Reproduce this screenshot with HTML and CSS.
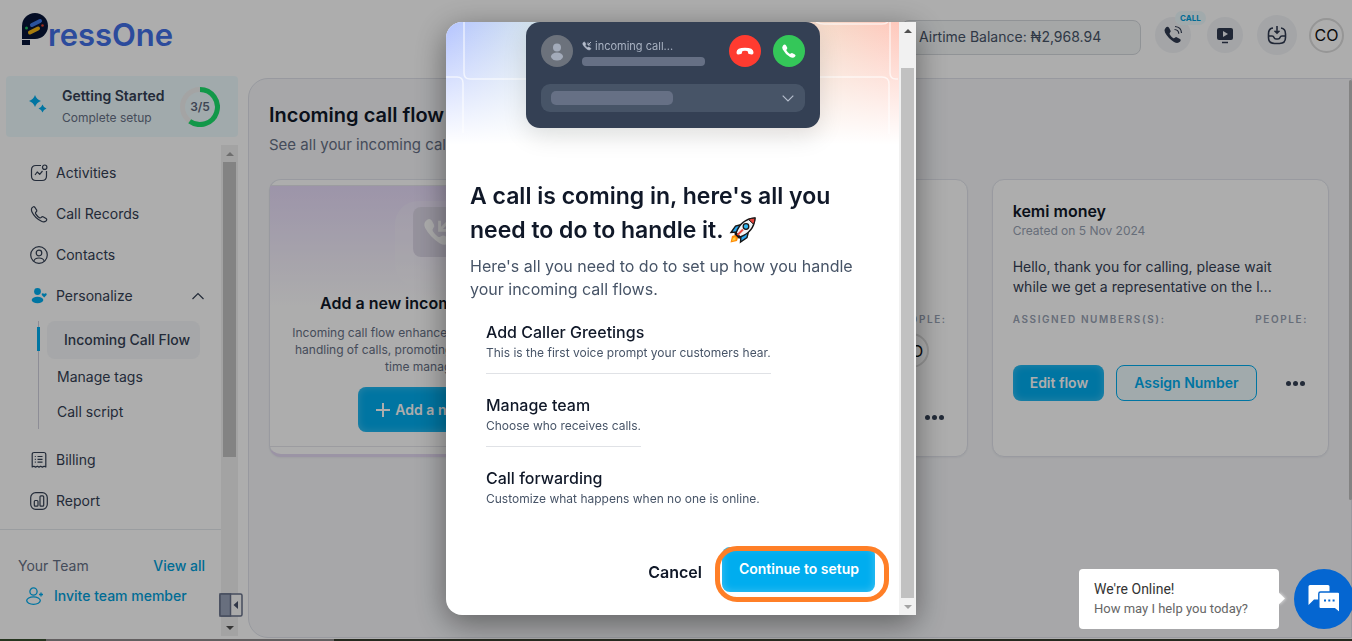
FILE: index.html
```html
<!DOCTYPE html>
<html lang="en">
<head>
<meta charset="utf-8">
<title>PressOne</title>
<link rel="stylesheet" href="styles.css">
</head>
<body>
<div class="app">
  <aside class="sidebar">
    <a class="logo" href="#" aria-label="PressOne">
      <svg class="logo-mark" width="26" height="33" viewBox="0 0 26 33"><path d="M13 0a13 13 0 0 1 0 26H0V13A13 13 0 0 1 13 0z" fill="#061437"/><path d="M0 27h8v5H0z" fill="#061437"/><path d="M10 12l8-4" stroke="#3f7bea" stroke-width="4" stroke-linecap="round"/><path d="M8 19.500l8-4" stroke="#f4b616" stroke-width="4" stroke-linecap="round"/><circle cx="4.500" cy="15" r="1.500" fill="#20c060"/><circle cx="20.500" cy="12.500" r="1.300" fill="#e8402a"/></svg><span class="logo-text">ressOne</span>
    </a>
    <section class="started">
      <svg width="18" height="18" viewBox="0 0 18 18" fill="#00adef"><path d="M6 0q1.500 4.500 6 6-4.500 1.500-6 6-1.500-4.500-6-6 4.500-1.500 6-6zM13.500 9.500q1 3 4 4-3 1-4 4-1-3-4-4 3-1 4-4z"/></svg>
      <div class="started-text"><strong>Getting Started</strong><span>Complete setup</span></div>
      <div class="ring"><svg width="40" height="40" viewBox="0 0 40 40" fill="none" stroke-width="5"><circle cx="20" cy="20" r="17.500" stroke="#f2f2f2"/><path d="M20 2.500a17.500 17.500 0 1 1-10.300 31.700" stroke="#1be06c"/></svg><b>3/5</b></div>
    </section>
    <div class="side-scroll">
      <div class="side-content">
        <nav class="nav">
          <a href="#"><svg class="ico" viewBox="0 0 18 18"><path d="M11 1.500H6Q1.500 1.500 1.500 6v6q0 4.500 4.500 4.500h6q4.500 0 4.500-4.500V7"/><circle cx="14.700" cy="3.200" r="2.200"/><path d="M5 11l2.200-3 2.500 2.300L12.500 7"/></svg>Activities</a>
          <a href="#"><svg class="ico" viewBox="0 0 18 18"><path d="M2 2.800Q3.500.8 5 2.500l1.500 2.300q.7 1.200-.5 2.200-.9.900-.3 1.900 1.500 2.400 3.700 3.800 1 .6 1.900-.3 1-1.100 2.200-.4l2.500 1.600q1.500 1.100 0 2.400Q14 17.600 11.500 16.300 4.600 12.700 2 7 .9 4.600 2 2.800z"/></svg>Call Records</a>
          <a href="#"><svg class="ico" viewBox="0 0 18 18"><circle cx="9" cy="9" r="8.300"/><circle cx="9" cy="7" r="2.800"/><path d="M3.800 15.300q.6-3.300 5.200-3.300t5.200 3.300"/></svg>Contacts</a>
          <a href="#" class="nav-open"><svg class="ico ico-fill" viewBox="0 0 18 18"><circle cx="7.500" cy="4.500" r="3.400"/><ellipse cx="7.500" cy="13" rx="5.800" ry="3.200"/><path d="M14.200 10.500L11.800 8q-.6-1.500.8-1.700 1-.1 1.600.8.600-.9 1.600-.8 1.400.2.800 1.700z"/></svg>Personalize<svg class="caret" width="14" height="8" viewBox="0 0 14 8"><path d="M1.500 7L7 1.500 12.500 7"/></svg></a>
          <div class="subnav">
            <a href="#" class="active">Incoming Call Flow</a>
            <a href="#">Manage tags</a>
            <a href="#">Call script</a>
          </div>
          <a href="#"><svg class="ico" viewBox="0 0 18 18"><path d="M2.200 16V3.500q0-2 2-2h9.600q2 0 2 2V16l-1.700-.8-1.700.9-1.700-.9-1.700.9-1.700-.9-1.700.9-1.700-.9zM7.500 5.500h5M7.500 8.300h5M7.500 11.100h5M4.800 5.500h1M4.800 8.300h1M4.800 11.100h1"/></svg>Billing</a>
          <a href="#"><svg class="ico" viewBox="0 0 18 18"><rect x=".7" y=".7" width="16.600" height="16.600" rx="5"/><rect x="4.300" y="8.500" width="3.700" height="5.700" rx="1"/><rect x="10" y="3.800" width="3.700" height="10.400" rx="1"/></svg>Report</a>
        </nav>
        <div class="team">
          <div class="team-row"><span>Your Team</span><a href="#">View all</a></div>
          <a class="invite" href="#"><svg width="18" height="18" viewBox="0 0 18 18" fill="none" stroke="#00adef" stroke-width="1.300"><circle cx="7.500" cy="4.500" r="3.600"/><ellipse cx="7.500" cy="13.600" rx="6.800" ry="3.700"/><path d="M15 5.500v4M13 7.500h4"/></svg>Invite team member</a>
        </div>
      </div>
      <div class="bar side-bar"><i class="up"></i><span class="thumb"></span><i class="down"></i></div>
      <button class="collapse" aria-label="Collapse sidebar"><svg width="24" height="24" viewBox="0 0 24 24"><rect x="1" y="1" width="22" height="22" rx="1.500" fill="#fbfbfb" stroke="#67718a" stroke-width="1.500"/><path d="M1 1h10.500v22H1z" fill="#9aa4ba" stroke="#67718a" stroke-width="1.500"/><path d="M19 8v8l-4.500-4z" fill="#475069"/></svg></button>
    </div>
  </aside>

  <div class="page">
    <header class="top">
      <div class="balance">Airtime Balance: ₦2,968.94</div>
      <button class="round call" aria-label="Call"><svg width="20" height="20" viewBox="0 0 20 20"><path d="M2.500 3Q4.600.6 6.200 3l1.300 2.400q.6 1.200-.5 2.200-.8.900-.2 1.900 1.300 2.200 3.200 3.400 1 .6 1.900-.2 1.100-1 2.200-.3l2.900 1.700q1.500 1 .2 2.400Q14.800 19.200 11 17 5 13.200 2 7.500.7 4.800 2.500 3z" fill="#303a50"/><path d="M11.500 4.500q4 .2 4.300 4.200M12 1.500q6.300.6 6.500 6.600" fill="none" stroke="#303a50" stroke-width="1.200"/></svg><span class="tag">CALL</span></button>
      <button class="round" aria-label="Tutorials"><svg width="18" height="18" viewBox="0 0 18 18"><rect x="1" y="2" width="16" height="12" rx="2" fill="#303a50"/><path d="M7 5v6l5-3z" fill="#f2f4f7"/><path d="M6 16.500h6" stroke="#303a50" stroke-width="1.500"/></svg></button>
      <button class="round large" aria-label="Inbox"><svg width="20" height="20" viewBox="0 0 20 20" fill="none" stroke="#303a50" stroke-width="1.600"><path d="M6 3Q1.500 3.500 1.500 9v3.500q0 6 6 6h5q6 0 6-6V9q0-5.500-4.500-6M1.700 11H5q1.500 0 2 1.500.5 1.500 2 1.500h2q1.500 0 2-1.500.5-1.500 2-1.500h3.300M10 1v7M7.500 5.700L10 8.200l2.500-2.500"/></svg></button>
      <button class="avatar">CO</button>
    </header>
    <main class="panel">
      <h1>Incoming call flow</h1>
      <p class="lead">See all your incoming call flows.</p>
      <div class="cards">
        <article class="card new-card">
          <div class="new-inner">
            <div class="new-tile"><svg width="32" height="32" viewBox="0 0 20 20"><path d="M2.500 3Q4.600.6 6.200 3l1.300 2.400q.6 1.200-.5 2.200-.8.900-.2 1.900 1.300 2.200 3.200 3.400 1 .6 1.900-.2 1.100-1 2.200-.3l2.900 1.700q1.500 1 .2 2.400Q14.800 19.200 11 17 5 13.200 2 7.500.7 4.800 2.500 3z" fill="#fff"/><path d="M11 3v6h5M11.500 8.500L17 3" fill="none" stroke="#fff" stroke-width="1.800"/></svg></div>
            <h2>Add a new incoming call setup</h2>
            <p>Incoming call flow enhances the quick and efficient<br>handling of calls, promoting productivity and good<br>time management.</p>
            <button class="btn btn-new"><svg width="14" height="14" viewBox="0 0 14 14" stroke="#fff" stroke-width="2"><path d="M7 0v14M0 7h14"/></svg>Add a new flow</button>
          </div>
        </article>
        <article class="card flow second">
          <div class="labels"><span>PEOPLE:</span></div>
          <div class="people"><span class="avatar">CO</span></div>
          <div class="actions"><button class="more" aria-label="More"><i></i><i></i><i></i></button></div>
        </article>
        <article class="card flow">
          <h2>kemi money</h2>
          <time>Created on 5 Nov 2024</time>
          <p>Hello, thank you for calling, please wait<br>while we get a representative on the l...</p>
          <div class="labels"><span>ASSIGNED NUMBERS(S):</span><span>PEOPLE:</span></div>
          <div class="actions"><button class="btn">Edit flow</button><button class="btn-line">Assign Number</button><button class="more" aria-label="More"><i></i><i></i><i></i></button></div>
        </article>
      </div>
    </main>
  </div>
  <span class="page-thumb"></span>
</div>

<div class="overlay">
  <div class="modal" role="dialog" aria-labelledby="dialog-title">
    <div class="modal-body">
      <div class="hero">
        <svg class="hero-lines" width="452" height="140" viewBox="0 0 452 140" fill="none" stroke="#fff" stroke-width="1.500" stroke-opacity=".65"><path d="M18 0v51q0 6 6 6h60M0 55h11q6 0 6 6v50M444 0v51q0 6 6 6h2M368 55h68q7 0 7 7v50M370 0q4 2 8 2h58q4 0 6-2"/></svg>
        <div class="phone">
          <div class="phone-top">
            <svg width="32" height="32" viewBox="0 0 32 32"><circle cx="16" cy="16" r="16" fill="#6c727c"/><circle cx="16" cy="12.500" r="4" fill="#a3abba"/><ellipse cx="16" cy="21.500" rx="6" ry="4" fill="#a3abba"/></svg>
            <div class="caller"><span><svg width="10" height="10" viewBox="0 0 20 20"><path d="M2.500 3Q4.600.6 6.200 3l1.300 2.400q.6 1.200-.5 2.200-.8.900-.2 1.900 1.300 2.200 3.200 3.400 1 .6 1.900-.2 1.100-1 2.200-.3l2.900 1.700q1.500 1 .2 2.400Q14.800 19.200 11 17 5 13.200 2 7.500.7 4.800 2.500 3z" fill="#b5bdcc" stroke="#b5bdcc"/><path d="M18 2l-6 6m0-5v5h5" fill="none" stroke="#b5bdcc" stroke-width="2"/></svg>incoming call...</span><i></i></div>
            <svg width="32" height="32" viewBox="0 0 32 32"><circle cx="16" cy="16" r="16" fill="#ff3b30"/><path d="M7.500 17.200Q7.700 12.800 16 12.800t8.500 4.400q.1 2.500-1.900 2.200l-2.500-.4q-1.300-.3-1.100-1.800.1-1-1-1.200-2-.3-4 0-1.100.2-1 1.200.2 1.500-1.100 1.800l-2.500.4q-2 .3-1.900-2.200z" fill="#fff"/></svg>
            <svg width="32" height="32" viewBox="0 0 32 32"><circle cx="16" cy="16" r="16" fill="#34c759"/><path transform="translate(8 8) scale(.82)" d="M2.500 3Q4.600.6 6.200 3l1.300 2.400q.6 1.200-.5 2.200-.8.900-.2 1.900 1.300 2.200 3.200 3.400 1 .6 1.900-.2 1.100-1 2.200-.3l2.900 1.700q1.500 1 .2 2.400Q14.800 19.200 11 17 5 13.200 2 7.500.7 4.800 2.500 3z" fill="#fff"/></svg>
          </div>
          <div class="phone-field"><i></i><svg width="12" height="7" viewBox="0 0 12 7" fill="none" stroke="#b5bdcc" stroke-width="1.200"><path d="M.7.7L6 6 11.300.7"/></svg></div>
        </div>
      </div>
      <div class="modal-text">
        <h2 id="dialog-title">A call is coming in, here's all you<br>need to do to handle it. <svg class="rocket" width="28" height="28" viewBox="0 0 28 28"><path d="M7.500 18.500L3 20l-1.500 6.500L8 25l1.500-4.500z" fill="#ff8c0a"/><path d="M6.500 21L4 22l-1 3 3.500-1z" fill="#ffd23e"/><path d="M12.500 8.500L6.500 10 2 16.500l6.500-.5zM19.500 15.500L18 21.500 11.500 26l.5-6.500z" fill="#2aa7ee" stroke="#161616" stroke-width="1.400"/><path d="M7 17Q12 3 26 2q-1 14-15 19z" fill="#f1f3f5" stroke="#161616" stroke-width="1.500"/><path d="M19.500 3.400Q22 2.200 26 2q0 3.500-1.500 6.200z" fill="#e8453c" stroke="#161616"/><circle cx="17" cy="10.500" r="2.800" fill="#2fb6f0" stroke="#161616" stroke-width="1.300"/><path d="M6 17l5 5" stroke="#161616" stroke-width="2.500"/><path d="M8.500 19l5.500-5.500" stroke="#e8453c" stroke-width="2"/></svg></h2>
        <p>Here's all you need to do to set up how you handle<br>your incoming call flows.</p>
        <ul class="steps">
          <li><b>Add Caller Greetings</b><span>This is the first voice prompt your customers hear.</span></li>
          <li><b>Manage team</b><span>Choose who receives calls.</span></li>
          <li><b>Call forwarding</b><span>Customize what happens when no one is online.</span></li>
        </ul>
      </div>
      <div class="modal-actions"><button class="cancel">Cancel</button><span class="highlight"><button class="btn">Continue to setup</button></span></div>
    </div>
    <div class="bar modal-bar"><i class="up"></i><span class="thumb"></span><i class="down"></i></div>
  </div>
</div>

<div class="chat">
  <div class="chat-bubble"><b>We're Online!</b><span>How may I help you today?</span></div>
  <button class="chat-button" aria-label="Open chat"><svg width="32" height="30" viewBox="0 0 32 30"><path d="M2 1h18q1.500 0 1.500 1.500V14q0 1.500-1.500 1.500H6L.5 21V2.500Q.5 1 2 1z" fill="#fff"/><path d="M12.500 8h17.500q1.700 0 1.700 1.700V29l-5-4.200H12.500q-1.700 0-1.700-1.700V9.700Q10.800 8 12.500 8z" fill="#fff" stroke="#0566d1" stroke-width="1.400"/><path d="M16 16.500h2M20.300 16.500h2M24.600 16.500h2" stroke="#0566d1" stroke-width="2"/></svg></button>
</div>
<div class="edge"></div>
</body>
</html>
```

FILE: styles.css
```css
* { box-sizing: border-box; }
body { margin: 0; height: 100vh; overflow: hidden; background: #fff; font-family: Inter, "Liberation Sans", sans-serif; font-size: 14px; line-height: 20px; color: #344054; }
a { color: inherit; text-decoration: none; }
button { font: inherit; color: inherit; border: 0; padding: 0; background: none; cursor: pointer; }
h1, h2, p, ul { margin: 0; padding: 0; }
svg { flex: none; }

.app { display: flex; gap: 10px; height: 100vh; }
.sidebar { width: 238px; flex: none; display: flex; flex-direction: column; padding-bottom: 5px; }
.logo { display: flex; height: 76px; padding: 13px 0 0 22px; }
.logo-text { font-size: 31px; line-height: 43px; font-weight: 600; color: #426fe6; }
.started { display: flex; align-items: center; height: 61px; margin-left: 6px; padding: 0 18px 0 23px; border-radius: 4px; background: #eefbfe; }
.started > svg { margin-bottom: 6px; }
.started-text { flex: 1; display: flex; flex-direction: column; gap: 2px; padding-left: 15px; }
.started-text strong { font-weight: 600; }
.started-text span { font-size: 12px; color: #667085; }
.ring { display: grid; place-items: center; }
.ring > * { grid-area: 1 / 1; }
.ring b { font-size: 12px; font-weight: 600; color: #5b667a; }

.side-scroll { position: relative; flex: 1; display: flex; min-height: 0; margin-top: 8px; }
.side-content { flex: 1; display: flex; flex-direction: column; }
.nav { display: flex; flex-direction: column; padding: 7px 16px 8px 30px; border-bottom: 1px solid #e4e7ec; }
.nav > a { display: flex; align-items: center; gap: 8px; height: 41px; }
.nav > .nav-open { height: 42px; }
.caret { margin-left: auto; fill: none; stroke: #344054; stroke-width: 1.2; }
.ico { width: 18px; height: 18px; fill: none; stroke: #344054; stroke-width: 1.2; stroke-linejoin: round; }
.ico-fill { fill: #00adef; stroke: none; }
.subnav { margin: 4px 0 10px 8px; padding-left: 8px; border-left: 1px solid #d0d0dd; display: flex; flex-direction: column; }
.subnav a { height: 35px; line-height: 35px; padding-left: 10px; }
.subnav .active { position: relative; height: 38px; line-height: 38px; margin-right: 5px; padding-left: 17px; border-radius: 8px; background: #f5f7f9; font-weight: 500; }
.subnav .active::before { content: ""; position: absolute; left: -10px; top: 6px; width: 3px; height: 24px; background: #00adef; }
.team { padding: 26px 16px 0 18px; }
.team-row { display: flex; justify-content: space-between; color: #667085; }
.team a { color: #00a0dc; font-weight: 500; }
.invite { display: flex; align-items: center; gap: 10px; margin: 10px 0 0 8px; }
.collapse { position: absolute; right: -5px; bottom: 19px; height: 24px; }

.bar { width: 17px; flex: none; display: flex; flex-direction: column; background: #f1f1f1; }
.bar i { height: 17px; flex: none; display: grid; place-items: center; }
.bar i::before { content: ""; border: 4px solid transparent; }
.bar .up::before { border-top: 0; border-bottom-color: #505050; }
.bar .down::before { border-bottom: 0; border-top-color: #505050; }
.bar .thumb { margin: 0 2px; background: #c1c1c1; }
.bar .down { margin-top: auto; }
.side-bar .up::before { border-bottom-color: #a3a3a3; }
.side-bar .thumb { flex: 0 0 60%; }

.page { flex: 1; min-width: 0; display: flex; flex-direction: column; padding-bottom: 3px; }
.top { height: 78px; display: flex; align-items: center; justify-content: flex-end; gap: 14px; padding: 0 8px 8px 0; }
.balance { width: 240px; height: 35px; margin-top: 4px; padding-left: 17px; line-height: 32px; border: 1px solid #d5d9dd; border-radius: 8px; background: #f3f6f7; color: #475467; }
.round { position: relative; width: 36px; height: 36px; border-radius: 50%; display: grid; place-items: center; background: #f2f4f7; }
.round.call { margin-right: 2px; }
.round.large { width: 40px; height: 40px; margin-right: -2px; }
.tag { position: absolute; left: 20px; top: -6px; padding: 0 5px; border-radius: 7px; background: #eefbfe; color: #00a0dc; font-size: 8px; line-height: 14px; font-weight: 700; }
.avatar { display: grid; place-items: center; width: 35px; height: 35px; border: 2px solid #ddd; border-radius: 50%; font-size: 16px; color: #111; }
.panel { flex: 1; padding: 24px 22px 0 20px; border: 1px solid #e0e2ea; border-radius: 20px 0 0 20px; background: #f6f7fa; }
h1 { font-size: 20px; line-height: 24px; font-weight: 600; color: #101828; }
.lead { margin: 7px 0 23px; font-size: 15px; line-height: 22px; color: #667085; }
.cards { display: grid; grid-template-columns: repeat(3, 1fr); gap: 24px; }
.card { height: 278px; border: 1px solid #e2e4ec; border-radius: 12px; background: #fff; box-shadow: 0 1px 2px #1018280d; }
.card h2 { font-size: 16px; line-height: 22px; font-weight: 600; color: #101828; }
.new-card { padding: 5px 0 7px; border-bottom: 3px solid #e5daf3; }
.new-inner { height: 100%; display: flex; flex-direction: column; align-items: center; padding-top: 21px; border: solid #e6e6ec; border-width: 1px 0; text-align: center; background: linear-gradient(#e7dbfa, #fff 46%); }
.new-tile { display: grid; place-items: center; width: 50px; height: 50px; margin-bottom: 35px; border-radius: 8px; background: #ddd8e8; box-shadow: 0 12px 0 18px #ffffff30; }
.new-inner p { margin: 10px 0 12px; font-size: 12px; line-height: 17px; color: #667085; }
.btn { height: 36px; padding: 0 16px 1px 17px; border-radius: 8px; background: #00adef; box-shadow: inset 0 0 9px #ffffff45; color: #fff; font-weight: 600; }
.btn-new { height: 45px; padding: 0 18px; display: flex; align-items: center; gap: 5px; }
.flow { display: flex; flex-direction: column; padding: 20px; }
.flow time { font-size: 12px; line-height: 18px; color: #98a2b3; }
.flow p { margin: 17px 0 12px; }
.labels { display: flex; justify-content: space-between; font-size: 10px; line-height: 20px; font-weight: 600; letter-spacing: 0.16em; color: #98a2b3; }
.actions { display: flex; align-items: center; gap: 12px; margin-top: 36px; }
.btn-line { height: 36px; padding: 0 17px; border: 1px solid #00adef; border-radius: 8px; background: #eefbfe; color: #00adef; font-weight: 600; }
.more { display: flex; gap: 2px; margin: 0 3px 0 auto; }
.more i { width: 5px; height: 5px; border-radius: 50%; background: #344054; }
.second .labels { margin-top: 109px; justify-content: flex-end; }
.second .people { display: flex; justify-content: flex-end; padding: 4px 18px 0 0; }
.second .actions { margin-top: 47px; }
.page-thumb { position: fixed; right: 0; top: 80px; width: 3px; height: 420px; background: #c1c1c1; border-radius: 3px; }

.overlay { position: fixed; inset: 0; display: flex; justify-content: center; align-items: center; padding: 22px 0 26px 10px; background: rgba(0, 0, 0, .32); }
.modal { width: 470px; height: 100%; display: flex; overflow: hidden; border-radius: 16px 0 0 16px; background: #fff; box-shadow: 0 8px 32px #00000070; }
.modal-body { flex: 1; display: flex; flex-direction: column; }
.modal-bar .thumb { flex: 1; margin-top: 29px; }
.modal-bar .down::before { border-top-color: #a3a3a3; }
.hero { position: relative; height: 157px; padding: 0 79px 0 80px; background: linear-gradient(#fff0, #fff 78%), linear-gradient(90deg, #b4c4ff, #dfeee9 25%, #f4f2ec 55%, #f6d9c8 84%, #ffc8bc); }
.hero-lines { position: absolute; left: 0; top: 0; }
.phone { position: relative; height: 106px; padding: 13px 15px; border-radius: 14px; background: #344054; box-shadow: 0 8px 24px #0000001f; }
.phone-top { display: flex; align-items: center; gap: 12px; }
.phone-top > svg:first-child { margin-right: -3px; }
.caller { flex: 1; display: flex; flex-direction: column; gap: 2px; margin-right: 12px; }
.caller span { display: flex; align-items: center; gap: 3px; font-size: 11px; line-height: 18px; color: #a9b2c2; }
.caller i { height: 9px; border-radius: 4px; background: #667085; }
.phone-field { display: flex; align-items: center; justify-content: space-between; height: 28px; margin-top: 17px; padding: 0 11px 0 10px; border-radius: 9px; background: #475467; }
.phone-field i { width: 122px; height: 14px; border-radius: 5px; background: #667085; }
.modal-text { padding: 0 24px; }
.modal-text h2 { font-size: 23px; line-height: 34px; font-weight: 600; color: #101828; }
.rocket { vertical-align: -6px; }
.modal-text p { margin: 8px 0 20px; font-size: 16px; line-height: 23px; color: #475467; }
.steps { list-style: none; padding: 0 16px; display: flex; flex-direction: column; align-items: flex-start; gap: 20px; }
.steps li { display: flex; flex-direction: column; padding-bottom: 11px; border-bottom: 1px solid #e0e2e6; }
.steps li:last-child { border: 0; }
.steps b { font-size: 16px; line-height: 23px; font-weight: 500; color: #101828; }
.steps span { font-size: 12px; line-height: 18px; color: #475467; }
.modal-actions { display: flex; align-items: center; justify-content: flex-end; gap: 13px; margin: auto 10px 13px 0; }
.cancel { font-size: 16px; font-weight: 600; color: #101828; margin-bottom: 5px; }
.highlight { position: relative; padding: 1px 14px 10px 7px; }
.highlight::after { content: ""; position: absolute; inset: 0; border: 5px solid #ff7f27; border-radius: 22px; pointer-events: none; }
.highlight .btn { display: block; height: 45px; }

.chat { position: fixed; right: -2px; bottom: 12px; display: flex; align-items: center; gap: 15px; font-family: Roboto, sans-serif; }
.chat-bubble { position: relative; display: flex; flex-direction: column; justify-content: center; width: 200px; height: 60px; padding-left: 15px; border-radius: 4px; background: #fff; color: #666; font-size: 13px; }
.chat-bubble::after { content: ""; position: absolute; right: -4px; top: 25px; width: 9px; height: 9px; background: #fff; transform: rotate(45deg); box-shadow: 1px -1px 3px #fff8; }
.chat-bubble b { font-size: 14px; font-weight: 400; color: #333; }
.chat-button { display: grid; place-items: center; width: 60px; height: 60px; border-radius: 50%; background: #0566d1; }
.edge { position: fixed; left: 0; right: 0; bottom: 0; height: 2px; background: linear-gradient(90deg, #26351f 46px, #625f60 46px, #625f60 334px, #25291f 334px); }
```
